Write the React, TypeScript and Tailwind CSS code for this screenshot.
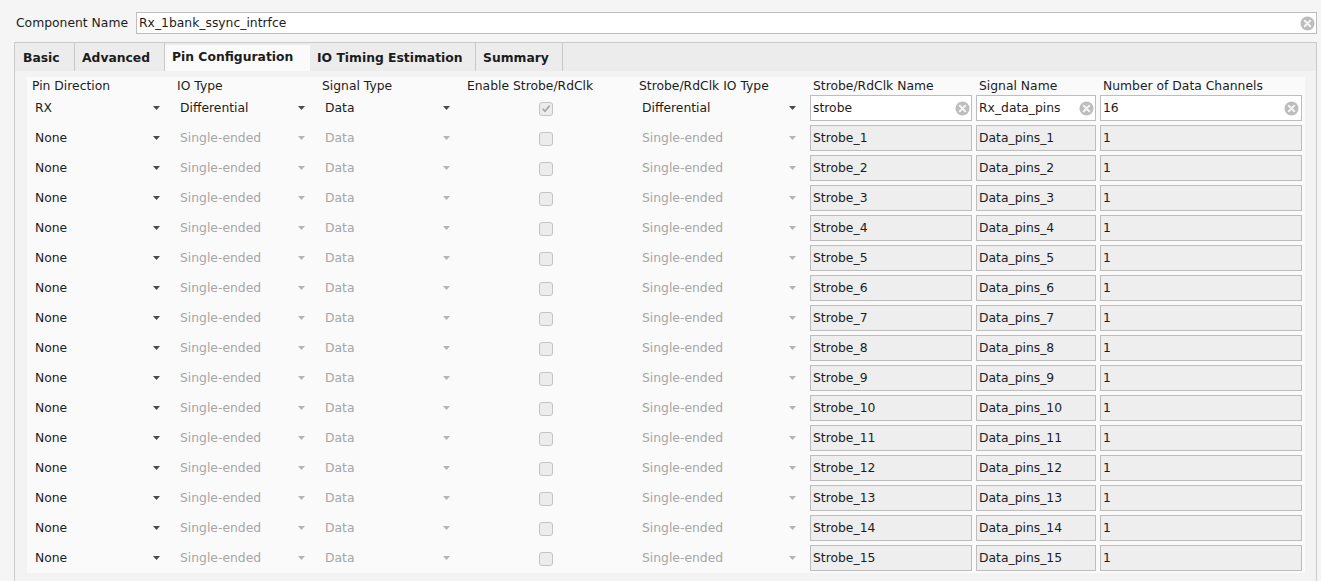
import React from "react";

const tabs = [
  { label: "Basic", width: "w-[60px] pl-[8px]" },
  { label: "Advanced", width: "w-[90px] pl-[7px]" },
  { label: "Pin Configuration", width: "w-[145px] pl-[7px]", active: true },
  { label: "IO Timing Estimation", width: "w-[166px] pl-[7px]" },
  { label: "Summary", width: "w-[87px] pl-[7px]" },
];

type Row = {
  dir: string;
  ioType: string;
  signal: string;
  checked: boolean;
  strobeType: string;
  strobeName: string;
  signalName: string;
  channels: string;
  enabled: boolean;
};

const rows: Row[] = [
  {
    dir: "RX",
    ioType: "Differential",
    signal: "Data",
    checked: true,
    strobeType: "Differential",
    strobeName: "strobe",
    signalName: "Rx_data_pins",
    channels: "16",
    enabled: true,
  },
  ...Array.from({ length: 15 }, (_, i) => ({
    dir: "None",
    ioType: "Single-ended",
    signal: "Data",
    checked: false,
    strobeType: "Single-ended",
    strobeName: `Strobe_${i + 1}`,
    signalName: `Data_pins_${i + 1}`,
    channels: "1",
    enabled: false,
  })),
];

function Arrow({ dim }: { dim?: boolean }) {
  return (
    <svg width="7" height="4" viewBox="0 0 7 4" className="shrink-0">
      <polygon points="0,0 7,0 3.5,4" fill={dim ? "#b4b4b4" : "#4a4a4a"} />
    </svg>
  );
}

function ClearIcon() {
  return (
    <svg width="15" height="15" viewBox="0 0 15 15" className="shrink-0">
      <circle cx="7.5" cy="7.5" r="7" fill="#bdbdbd" />
      <path d="M4.8 4.8 L10.2 10.2 M10.2 4.8 L4.8 10.2" stroke="#f4f4f4" strokeWidth="2" strokeLinecap="round" />
    </svg>
  );
}

function Combo({ value, dim, pr }: { value: string; dim?: boolean; pr: string }) {
  return (
    <div className={`flex h-full items-center justify-between pl-[3px] ${pr}`}>
      <span className={dim ? "text-[#a6a6a6]" : "text-[#1c1c1c]"}>{value}</span>
      <Arrow dim={dim} />
    </div>
  );
}

function Field({
  value,
  enabled,
  width,
  clearPr,
}: {
  value: string;
  enabled: boolean;
  width: string;
  clearPr: string;
}) {
  return (
    <div
      className={`flex h-[26px] ${width} items-center justify-between border border-[#bdbdbd] pl-[2px] ${clearPr} ${
        enabled ? "bg-white" : "bg-[#eeeeee]"
      }`}
    >
      <span className="text-[#1c1c1c]">{value}</span>
      {enabled && <ClearIcon />}
    </div>
  );
}

function Checkbox({ checked }: { checked: boolean }) {
  return (
    <div className="ml-[72px] flex h-[14px] w-[14px] items-center justify-center rounded-[3px] border border-[#c4c4c4] bg-[#ececec]">
      {checked && (
        <svg width="10" height="9" viewBox="0 0 10 9">
          <path d="M1.5 4.8 L4 7.2 L8.6 1.6" fill="none" stroke="#a8a8a8" strokeWidth="1.7" />
        </svg>
      )}
    </div>
  );
}

const headers = [
  { label: "Pin Direction", cls: "w-[145px]" },
  { label: "IO Type", cls: "w-[145px]" },
  { label: "Signal Type", cls: "w-[145px]" },
  { label: "Enable Strobe/RdClk", cls: "w-[172px]" },
  { label: "Strobe/RdClk IO Type", cls: "w-[171px]" },
  { label: "Strobe/RdClk Name", cls: "w-[166px] pl-[3px]" },
  { label: "Signal Name", cls: "w-[124px] pl-[3px]" },
  { label: "Number of Data Channels", cls: "w-[202px] pl-[3px]" },
];

export default function App() {
  return (
    <div className="h-[581px] w-[1321px] overflow-hidden bg-[#f5f5f5] font-['DejaVu_Sans',sans-serif] text-[12.35px] text-[#1c1c1c]">
      <div className="flex items-center pl-[16px] pr-[4px] pt-[12px]">
        <span className="w-[120px] shrink-0">Component Name</span>
        <div className="flex h-[22px] flex-1 items-center justify-between border border-[#bdbdbd] bg-white pl-[2px] pr-[1px]">
          <span>Rx_1bank_ssync_intrfce</span>
          <ClearIcon />
        </div>
      </div>

      <div className="ml-[14px] mr-[4px] mt-[8px] border border-[#cacaca] bg-[#f3f3f3]">
        <div className="flex h-[28px] bg-[#ececec]">
          {tabs.map((t) => (
            <div
              key={t.label}
              className={`flex ${t.width} items-center font-bold ${
                t.active ? "mt-[2px] pb-[1px] bg-[#fafafa]" : "pt-[2px] border-r border-[#c8c8c8]"
              }`}
            >
              {t.label}
            </div>
          ))}
        </div>

        <div className="pl-[12px] pr-[11px] pt-[6px] pb-[10px]">
          <div className="bg-[#fafafa] pl-[5px]">
            <div className="flex h-[16px] items-center pt-[2px]">
              {headers.map((h) => (
                <div key={h.label} className={`shrink-0 ${h.cls}`}>
                  {h.label}
                </div>
              ))}
            </div>
            {rows.map((r, i) => (
              <div key={i} className="flex h-[30px] items-center">
                <div className="h-full w-[145px] shrink-0">
                  <Combo value={r.dir} pr="pr-[17px]" />
                </div>
                <div className="h-full w-[145px] shrink-0">
                  <Combo value={r.ioType} dim={!r.enabled} pr="pr-[17px]" />
                </div>
                <div className="h-full w-[145px] shrink-0">
                  <Combo value={r.signal} dim={!r.enabled} pr="pr-[17px]" />
                </div>
                <div className="flex w-[172px] shrink-0 items-center pt-[1px]">
                  <Checkbox checked={r.checked} />
                </div>
                <div className="h-full w-[171px] shrink-0">
                  <Combo value={r.strobeType} dim={!r.enabled} pr="pr-[14px]" />
                </div>
                <div className="w-[166px] shrink-0">
                  <Field value={r.strobeName} enabled={r.enabled} width="w-[162px]" clearPr="pr-[1px]" />
                </div>
                <div className="w-[124px] shrink-0">
                  <Field value={r.signalName} enabled={r.enabled} width="w-[120px]" clearPr="pr-[1px]" />
                </div>
                <div className="w-[202px] shrink-0">
                  <Field value={r.channels} enabled={r.enabled} width="w-[202px]" clearPr="pr-[2px]" />
                </div>
              </div>
            ))}
          </div>
        </div>
      </div>
    </div>
  );
}
